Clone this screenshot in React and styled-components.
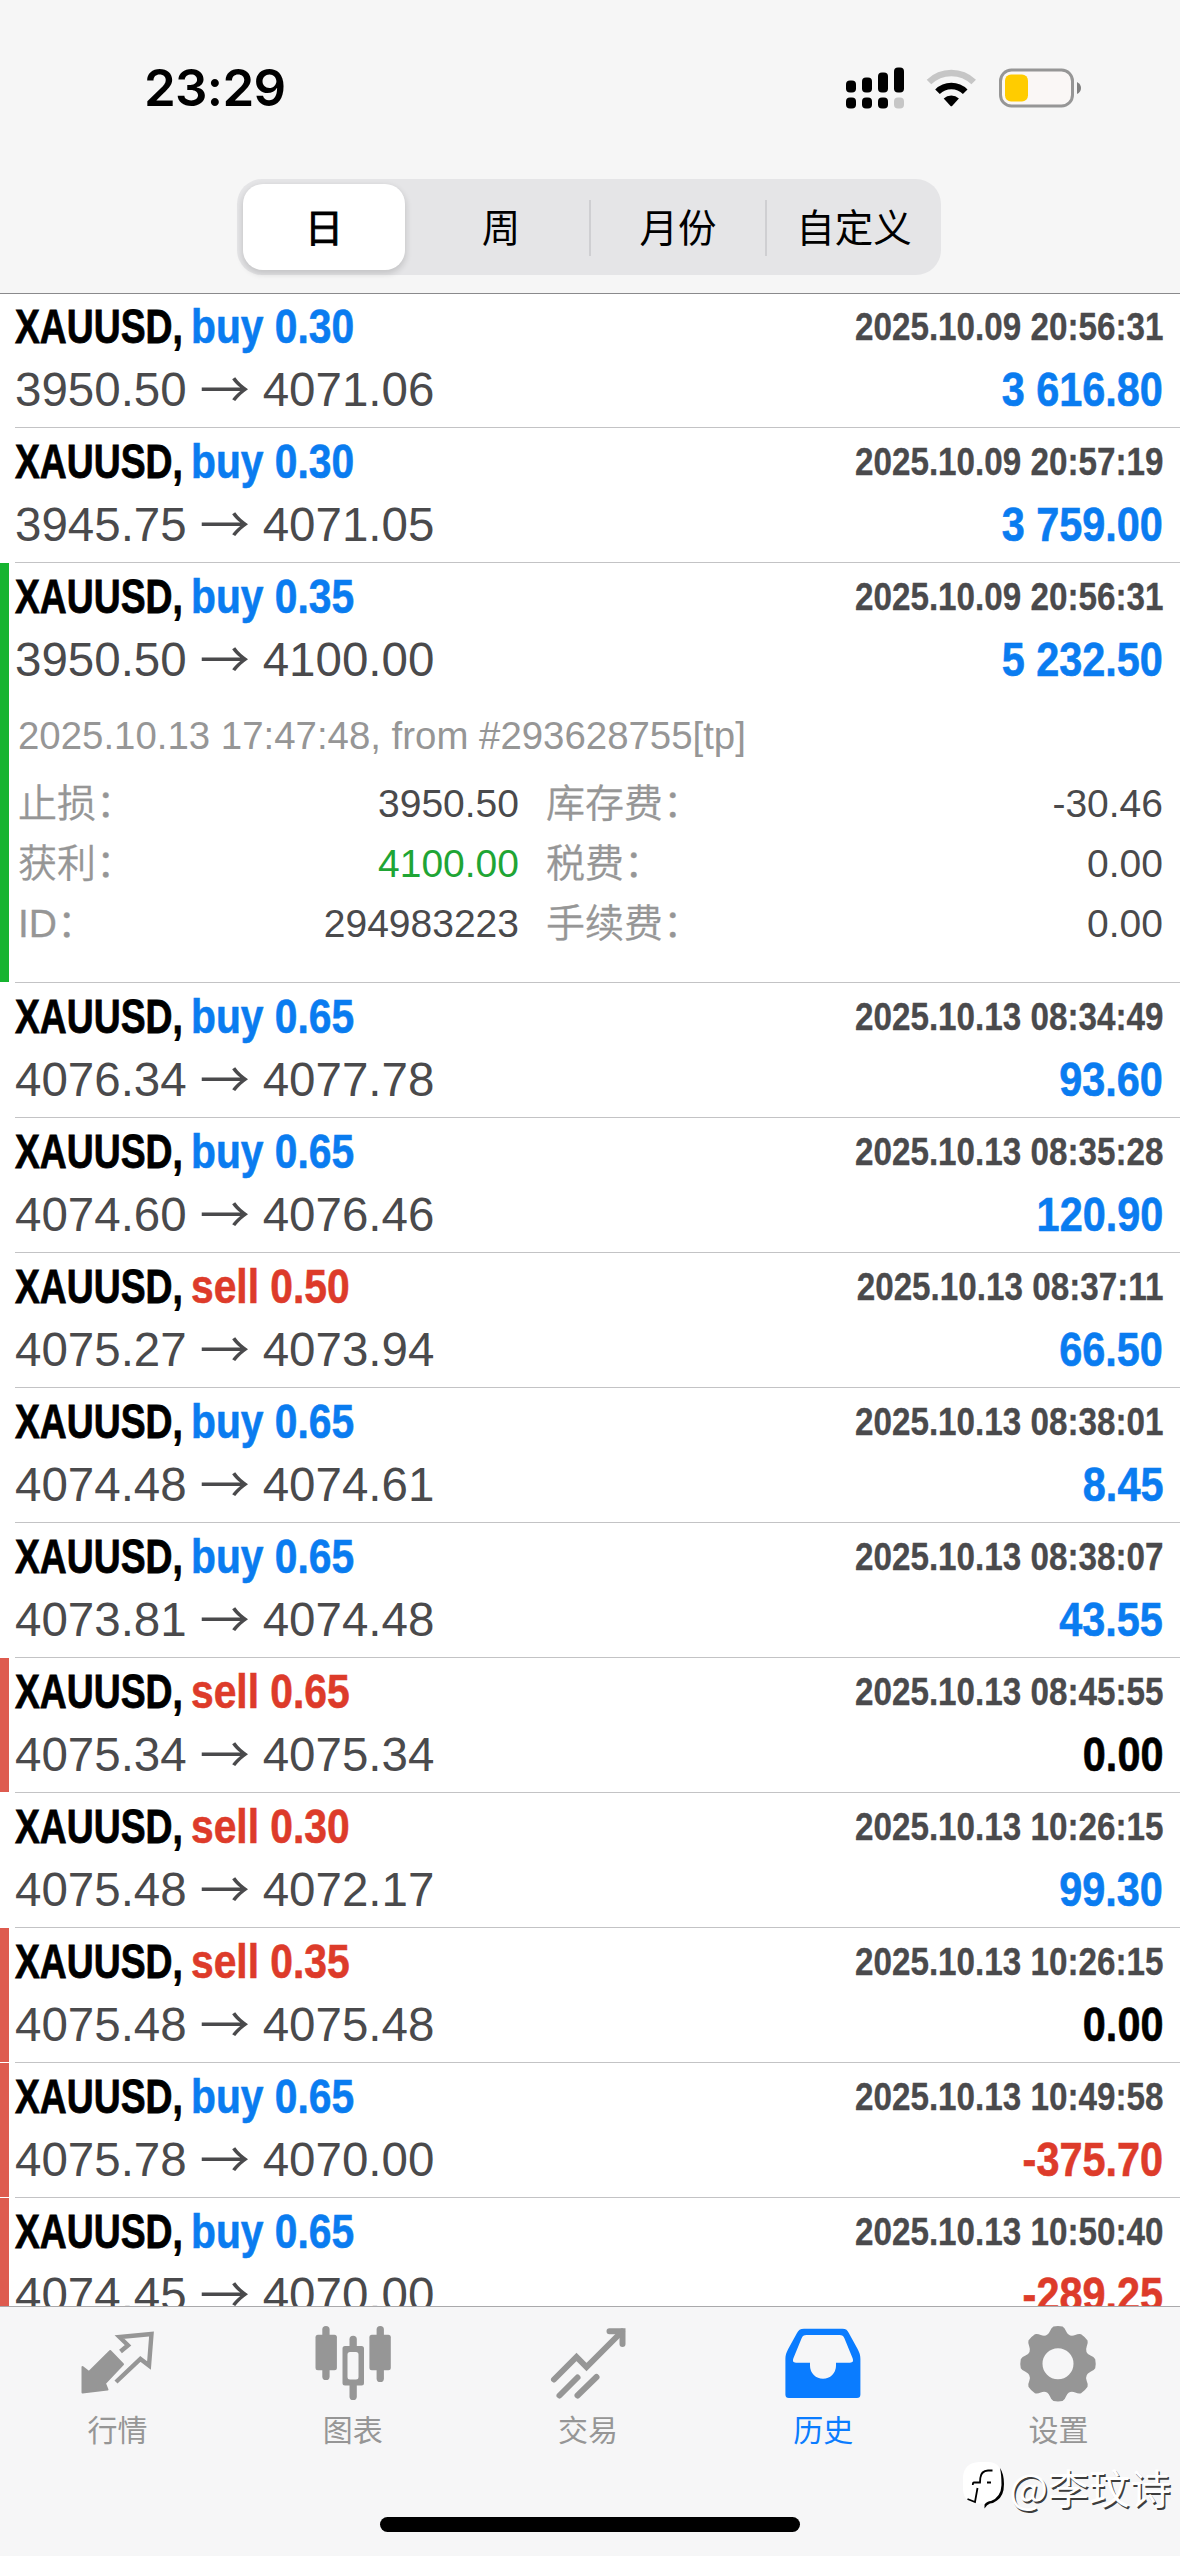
import React from "react";
import styled, { createGlobalStyle } from "styled-components";

const BLUE = "#0a7cf0";
const RED = "#dd3b2a";
const GREEN = "#16b430";
const GRAY = "#969696";

const GlobalStyle = createGlobalStyle`
  *, *::before, *::after { box-sizing: border-box; }
  body {
    margin: 0;
    background: #fff;
    font-family: "Liberation Sans", "Noto Sans CJK SC", sans-serif;
  }
`;

const Screen = styled.div`
  position: relative;
  display: flex;
  flex-direction: column;
  width: 1180px;
  height: 2556px;
  overflow: hidden;
  background: #fff;
`;

const Header = styled.header`
  position: relative;
  z-index: 1;
  flex: none;
  height: 294px;
  background: #f6f6f6;
  border-bottom: 1px solid #8a8a8c;
`;

const StatusBar = styled.div`
  display: flex;
  justify-content: space-between;
  align-items: center;
  height: 179px;
  padding: 0 96px 4px 144px;
`;

const Clock = styled.div`
  font: 600 51px/60px Inter, sans-serif;
  letter-spacing: -0.7px;
  color: #000;
`;

const StatusIcons = styled.svg`
  display: block;
  width: 240px;
  height: 44px;
`;

const Segments = styled.div`
  display: grid;
  grid-template-columns: repeat(4, 1fr);
  width: 704px;
  height: 96px;
  margin: 0 auto 0 237px;
  border-radius: 25px;
  background: #e5e5e7;
`;

const Segment = styled.button`
  display: flex;
  align-items: center;
  justify-content: center;
  margin: ${(p) => (p.$active ? "5px 8px 6px 6px" : "21px 0 20px")};
  padding: ${(p) => (p.$active ? "0 0 5px" : "0 0 6px")};
  border: 0;
  border-left: ${(p) => (p.$divided ? "2px solid #cfcfd2" : "0")};
  border-radius: ${(p) => (p.$active ? "20px" : "0")};
  background: ${(p) => (p.$active ? "#fff" : "transparent")};
  box-shadow: ${(p) => (p.$active ? "0 3px 6px 1px rgba(0, 0, 0, 0.14)" : "none")};
  color: #000;
  font: 400 38.5px/50px "Noto Sans CJK SC", sans-serif;
  -webkit-text-stroke: ${(p) => (p.$active ? "0.9px" : "0")} #000;
`;

const List = styled.main`
  flex: 1;
  min-height: 0;
  margin-top: -1px;
  overflow: hidden;
`;

const Row = styled.article`
  display: flex;
  height: ${(p) => (p.$open ? 420 : 135)}px;
`;

const Marker = styled.div`
  flex: none;
  width: 9px;
  margin: 0 6px 1px 0;
  background: ${(p) => p.$color || "transparent"};
`;

const RowBody = styled.div`
  flex: 1;
  padding: 9px 17px 0 0;
  border-bottom: 1px solid #c3c3c5;
`;

const Line = styled.div`
  display: flex;
  justify-content: space-between;
  height: 50px;
  margin-top: ${(p) => p.$gap || 0}px;
`;

const Title = styled.div`
  display: grid;
  grid-template-columns: 176px auto;
  font-size: 47.5px;
  font-weight: 700;
  line-height: 50px;
  white-space: nowrap;
`;

const Symbol = styled.span`
  color: #000;
  transform: scaleX(0.785);
  transform-origin: left;
  -webkit-text-stroke: 0.8px currentColor;
`;

const Side = styled.span`
  color: ${(p) => (p.$side === "buy" ? BLUE : RED)};
  transform: scaleX(0.858);
  transform-origin: left;
  -webkit-text-stroke: 0.6px currentColor;
`;

const Time = styled.time`
  color: #4a4a4c;
  font-size: 38.5px;
  font-weight: 700;
  line-height: 49px;
  white-space: nowrap;
  transform: scaleX(0.863);
  transform-origin: right;
  -webkit-text-stroke: 0.3px currentColor;
`;

const Prices = styled.div`
  display: flex;
  color: #4a4a4c;
  font-size: 47.5px;
  line-height: 50px;
`;

const Arrow = styled.span`
  width: 76px;
  margin-top: -4px;
  text-align: center;
  font-family: "Noto Sans CJK SC", sans-serif;
  font-size: 50px;
`;

const Profit = styled.div`
  color: ${(p) => p.$color};
  font-size: 47.5px;
  font-weight: 700;
  line-height: 50px;
  white-space: nowrap;
  transform: scaleX(0.872);
  transform-origin: right;
  -webkit-text-stroke: 0.6px currentColor;
`;

const Comment = styled.div`
  height: 50px;
  margin: 26px 0 13px 3px;
  color: ${GRAY};
  font-size: 38.4px;
  line-height: 50px;
`;

const Details = styled.dl`
  display: grid;
  grid-template-columns: 501px 1fr;
  column-gap: 27px;
  margin: 0 0 0 3px;
`;

const Detail = styled.div`
  display: flex;
  justify-content: space-between;
  height: 60px;
  font-size: 39px;
  line-height: 60px;
`;

const Label = styled.dt`
  color: ${GRAY};
  font-weight: 350;
  -webkit-text-stroke: 0.3px currentColor;
`;

const Value = styled.dd`
  margin: 0;
  color: ${(p) => (p.$good ? "#1fa535" : "#4a4a4c")};
`;

const TabBar = styled.nav`
  display: grid;
  grid-template-columns: repeat(5, 1fr);
  flex: none;
  height: 250px;
  padding: 17px 4px 0 0;
  border-top: 1px solid #a9a9ab;
  background: #f6f6f7;
`;

const Tab = styled.a`
  display: flex;
  flex-direction: column;
  align-items: center;
  color: ${(p) => (p.$active ? "#0a7cff" : GRAY)};
  font: 400 30px/40px "Noto Sans CJK SC", sans-serif;
`;

const TabIcon = styled.svg`
  display: block;
  width: 80px;
  height: 80px;
  margin-bottom: 4px;
`;

const HomeIndicator = styled.div`
  position: absolute;
  left: 380px;
  bottom: 24px;
  width: 420px;
  height: 15px;
  border-radius: 8px;
  background: #000;
`;

const Watermark = styled.div`
  position: absolute;
  right: 9px;
  bottom: 42px;
  display: flex;
  align-items: center;
  gap: 2px;
  color: #fff;
  font: 400 41px/56px "Noto Sans CJK SC", sans-serif;
  text-shadow: 1.5px 1.5px 0.5px rgba(0, 0, 0, 0.75);
`;

const WatermarkLogo = styled.svg`
  width: 44px;
  height: 56px;
`;

const gearPath = (() => {
  const at = (deg, r) => {
    const a = (deg * Math.PI) / 180;
    return `${(40 + r * Math.sin(a)).toFixed(2)} ${(39.7 - r * Math.cos(a)).toFixed(2)}`;
  };
  let d = `M${at(-7, 37.5)}`;
  for (let i = 0; i < 8; i += 1) {
    const c = i * 45;
    d += `Q${at(c, 38.2)} ${at(c + 7, 37.5)}Q${at(c + 11, 36.5)} ${at(c + 14, 33.5)}Q${at(c + 22.5, 28.5)} ${at(c + 31, 33.5)}Q${at(c + 34, 36.5)} ${at(c + 38, 37.5)}`;
  }
  return `${d}ZM55.5 39.7a15.5 15.5 0 1 0-31 0a15.5 15.5 0 1 0 31 0Z`;
})();

const icons = {
  quotes: (
    <>
      <path d="M42.5 27.5L50 21.3L41.5 13L73.5 10L71 41.5L62.4 35L38 58" fill="none" stroke="currentColor" strokeWidth="4.4" />
      <path d="M4.500 43L11 48L32.200 27L45 40.300L27 59.300L29.500 65.500L4.500 68.500Z" fill="currentColor" stroke="currentColor" strokeWidth="2" strokeLinejoin="round" />
    </>
  ),
  chart: (
    <g fill="currentColor">
      <rect x="9.3" y="2" width="7.3" height="54" rx="3.6" />
      <rect x="2.5" y="10.7" width="21.4" height="35.6" rx="2.5" />
      <rect x="63.6" y="2" width="7.3" height="56" rx="3.6" />
      <rect x="56.4" y="10.7" width="21.4" height="35.6" rx="2.5" />
      <rect x="36.5" y="11.7" width="7.3" height="20" rx="3.6" />
      <rect x="36.5" y="56" width="7.3" height="20" rx="3.6" />
      <path fill="#f6f6f7" d="M33 26h14v32h-14z" />
      <path fillRule="evenodd" d="M32 22h16.500a2.500 2.500 0 0 1 2.500 2.500v34.500a2.500 2.500 0 0 1-2.500 2.500h-16.500a2.500 2.500 0 0 1-2.500-2.500v-34.500a2.500 2.500 0 0 1 2.500-2.500zM37 28a2.500 2.500 0 0 0-2.500 2.500v22.500a2.500 2.500 0 0 0 2.500 2.500h6a2.500 2.500 0 0 0 2.500-2.500v-22.500a2.500 2.500 0 0 0-2.500-2.500z" />
    </g>
  ),
  trade: (
    <g fill="none" stroke="currentColor" strokeWidth="6" strokeLinecap="round">
      <path d="M6 55.500L28.500 33L38.500 43L74 7.500" />
      <path d="M61.500 7.200H74.500V20" />
      <path d="M11.500 71.500L29.500 53.500" />
      <path d="M29.500 71.500L48.500 53" />
    </g>
  ),
  history: (
    <path
      fill="currentColor"
      fillRule="evenodd"
      d="M21 4.700h38.500c3.500 0 5 1.500 6.300 4.300l8.800 16c2 3.800 2.800 6.500 2.800 10v35.500c0 2.400-1.200 3.500-3.500 3.500h-68c-2.300 0-3.500-1.100-3.500-3.500v-35.500c0-3.500.8-6.200 2.800-10l8.800-16c1.500-2.800 3.200-4.300 7-4.300zM23.500 11c-2.800 0-3.800.8-5 3.500l-8 19.500c-1.100 2.800-.5 4.700 2.500 4.700h14v3a13 13 0 0 0 26 0v-3h14c3 0 3.600-1.900 2.500-4.700l-8-19.500c-1.200-2.700-2.200-3.500-5-3.500z"
    />
  ),
  settings: <path d={gearPath} fill="currentColor" fillRule="evenodd" />,
};

const SEGMENTS = ["日", "周", "月份", "自定义"];

const TABS = [
  ["quotes", "行情"],
  ["chart", "图表"],
  ["trade", "交易"],
  ["history", "历史"],
  ["settings", "设置"],
];

const DEALS = [
  { side: "buy", lot: "0.30", from: "3950.50", to: "4071.06", time: "2025.10.09 20:56:31", profit: "3 616.80" },
  { side: "buy", lot: "0.30", from: "3945.75", to: "4071.05", time: "2025.10.09 20:57:19", profit: "3 759.00" },
  {
    side: "buy", lot: "0.35", from: "3950.50", to: "4100.00", time: "2025.10.09 20:56:31", profit: "5 232.50", mark: GREEN,
    comment: "2025.10.13 17:47:48, from #293628755[tp]",
    details: [
      ["止损：", "3950.50"],
      ["库存费：", "-30.46"],
      ["获利：", "4100.00", true],
      ["税费：", "0.00"],
      ["ID：", "294983223"],
      ["手续费：", "0.00"],
    ],
  },
  { side: "buy", lot: "0.65", from: "4076.34", to: "4077.78", time: "2025.10.13 08:34:49", profit: "93.60" },
  { side: "buy", lot: "0.65", from: "4074.60", to: "4076.46", time: "2025.10.13 08:35:28", profit: "120.90" },
  { side: "sell", lot: "0.50", from: "4075.27", to: "4073.94", time: "2025.10.13 08:37:11", profit: "66.50" },
  { side: "buy", lot: "0.65", from: "4074.48", to: "4074.61", time: "2025.10.13 08:38:01", profit: "8.45" },
  { side: "buy", lot: "0.65", from: "4073.81", to: "4074.48", time: "2025.10.13 08:38:07", profit: "43.55" },
  { side: "sell", lot: "0.65", from: "4075.34", to: "4075.34", time: "2025.10.13 08:45:55", profit: "0.00", mark: "#de5b4f" },
  { side: "sell", lot: "0.30", from: "4075.48", to: "4072.17", time: "2025.10.13 10:26:15", profit: "99.30" },
  { side: "sell", lot: "0.35", from: "4075.48", to: "4075.48", time: "2025.10.13 10:26:15", profit: "0.00", mark: "#de5b4f" },
  { side: "buy", lot: "0.65", from: "4075.78", to: "4070.00", time: "2025.10.13 10:49:58", profit: "-375.70", mark: "#de5b4f" },
  { side: "buy", lot: "0.65", from: "4074.45", to: "4070.00", time: "2025.10.13 10:50:40", profit: "-289.25", mark: "#de5b4f" },
];

const profitColor = (value) => {
  if (value.startsWith("-")) return RED;
  return value === "0.00" ? "#000" : BLUE;
};

function Deal({ deal }) {
  return (
    <Row $open={Boolean(deal.details)}>
      <Marker $color={deal.mark} />
      <RowBody>
        <Line>
          <Title>
            <Symbol>XAUUSD,</Symbol>
            <Side $side={deal.side}>{deal.side} {deal.lot}</Side>
          </Title>
          <Time>{deal.time}</Time>
        </Line>
        <Line $gap={13}>
          <Prices>
            <span>{deal.from}</span>
            <Arrow>→</Arrow>
            <span>{deal.to}</span>
          </Prices>
          <Profit $color={profitColor(deal.profit)}>{deal.profit}</Profit>
        </Line>
        {deal.details && (
          <>
            <Comment>{deal.comment}</Comment>
            <Details>
              {deal.details.map(([label, value, good]) => (
                <Detail key={label}>
                  <Label>{label}</Label>
                  <Value $good={good}>{value}</Value>
                </Detail>
              ))}
            </Details>
          </>
        )}
      </RowBody>
    </Row>
  );
}

export default function App() {
  return (
    <Screen>
      <GlobalStyle />
      <Header>
        <StatusBar>
          <Clock>23:29</Clock>
          <StatusIcons viewBox="844 65.500 240 44">
            <rect x="846" y="80" width="10" height="12" rx="4" />
            <rect x="862" y="77" width="10" height="15" rx="4" />
            <rect x="878" y="72" width="10" height="20" rx="4" />
            <rect x="894" y="67" width="10" height="25" rx="4" />
            <rect x="846" y="97" width="10" height="11" rx="4" />
            <rect x="862" y="97" width="10" height="11" rx="4" />
            <rect x="878" y="97" width="10" height="11" rx="4" />
            <rect x="894" y="97" width="10" height="11" rx="4" fill="#c6c6c6" />
            <g fill="none" strokeWidth="6.500">
              <path d="M929 81.500a32 32 0 0 1 44.700 0" stroke="#c6c6c6" />
              <path d="M937.500 91.300a19.500 19.500 0 0 1 27.700 0" stroke="#000" />
            </g>
            <path d="M943.700 98a11 11 0 0 1 15.200 0l-6.600 7.200q-1 1-2 0z" />
            <rect x="1000.500" y="69.500" width="72" height="36" rx="11" fill="#faf7f6" stroke="#969696" strokeWidth="3" />
            <rect x="1005" y="74" width="23" height="27" rx="6" fill="#ffcc00" />
            <path d="M1077 81.500q4 2 4 6t-4 6z" fill="#808080" />
          </StatusIcons>
        </StatusBar>
        <Segments>
          {SEGMENTS.map((name, i) => (
            <Segment key={name} $active={i === 0} $divided={i > 1}>{name}</Segment>
          ))}
        </Segments>
      </Header>
      <List>
        {DEALS.map((deal) => (
          <Deal key={deal.time + deal.profit + deal.from} deal={deal} />
        ))}
      </List>
      <TabBar>
        {TABS.map(([icon, name]) => (
          <Tab key={icon} $active={icon === "history"}>
            <TabIcon viewBox="0 0 80 80">{icons[icon]}</TabIcon>
            {name}
          </Tab>
        ))}
      </TabBar>
      <HomeIndicator />
      <Watermark>
        <WatermarkLogo viewBox="0 -3 44 56">
          <path d="M16 1H25Q38 1 38 15V27Q38 39 28 41.500Q24 43 21.500 47L20 42.500H15Q1 42 0 29V16Q1 2 16 1Z" fill="#fff" />
          <path d="M37 7Q41 13 41 23Q41 35 34 39.500Q31 42 27 42.500Q24 43.500 21.500 47.500V43.500Q24 40 28 40Q38 36 38.500 24Q38.500 14 37 7Z" fill="#000" />
          <path d="M29.500 9.500H25Q18 10 17.300 17L17 21.500H11Q9.800 21.500 9.800 24M24 21.500H28M14.500 27L12 41L4.500 38" fill="none" stroke="#000" strokeWidth="1.800" />
        </WatermarkLogo>
        @李玟诗
      </Watermark>
    </Screen>
  );
}
